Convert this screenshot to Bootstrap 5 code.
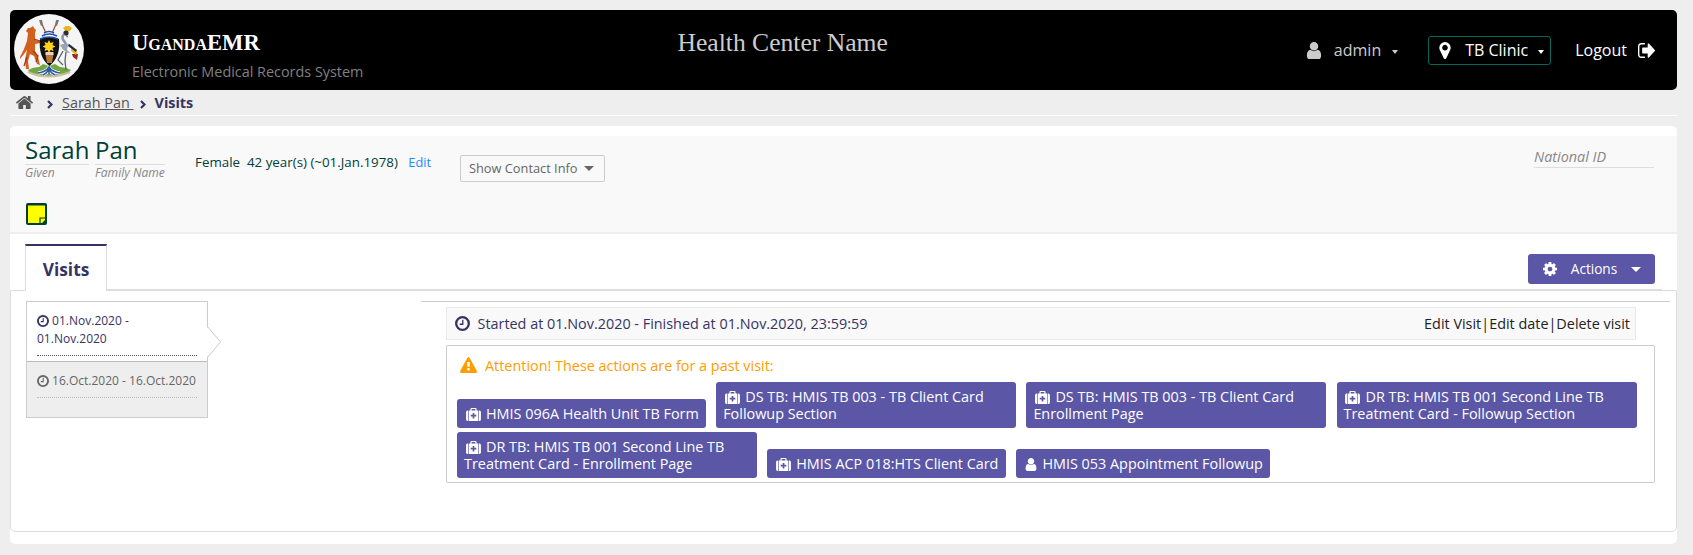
<!DOCTYPE html>
<html lang="en">
<head>
<meta charset="utf-8">
<title>UgandaEMR - Visits</title>
<link href="https://cdn.jsdelivr.net/npm/bootstrap@5.3.0/dist/css/bootstrap.min.css" rel="stylesheet">
<style>
body{background:#eee;font-family:"Open Sans",sans-serif;font-size:14.4px;color:#363463;padding:10px 16px 0 10px;white-space:nowrap;line-height:20px}
svg{display:block;fill:currentColor;flex:none}
.topbar{height:80px;background:#000;border-radius:5px;padding-left:4px;padding-right:22px}
.brand-side{width:663.5px}
.brandname{font:bold 22.6px/26px "Liberation Serif",serif;font-variant:small-caps;color:#fff}
.tagline{font-size:14.4px;color:#808080;line-height:20px;margin-top:6px}
.center-name{font:25.6px/30px "Liberation Serif",serif;color:#ccc;margin-top:18px}
.top-tools{font-size:16px;color:#fff;line-height:24px}
.admin-menu{color:#ccc}
.place{border:1px solid #00695c;border-radius:3px;height:29px;width:123px;padding-left:10px}
.tri{width:0;height:0;border:3.500px solid transparent;border-top:4px solid currentColor;border-bottom:0;margin-top:3px}
.tri-lg{border-width:5px;border-bottom:0;margin-top:0}
.crumbs{height:26px;border-bottom:1px solid #fff;font-size:14.4px;padding-left:6px}
.crumbs a{color:#555}
.panel{background:#fff;border-radius:5px;height:418px;margin-top:10px;padding-top:10px}
.patient{background:#f9f9f9;height:98px;border-bottom:2px solid #eee;padding-left:15px;padding-right:23px;color:#003f38}
.pname{font-size:24px;line-height:28px;border-bottom:1px solid #ddd;height:29px}
.hint{font-size:12.1px;font-style:italic;color:#888;line-height:16px}
.demo{font-size:13.35px;width:235px;margin:16px 0 0 30px}
.demo a{color:#1e88ff;text-decoration:none;font-size:12.8px}
.contact{border:1px solid #ccc;border-radius:2px;width:145px;height:27px;margin:19px 0 0 30px;padding:0 0 1px 8px;font-size:12.8px;color:#666}
.national{width:120px;height:21px;margin-top:11px;border-bottom:1px solid #ddd;font-size:14.4px;font-style:italic;color:#888}
.tabs-row{height:56px;padding-left:15px;padding-right:22px}
.tab-visits{width:82px;height:47px;margin-top:10px;border:1px solid #ddd;border-top:2px solid #363463;border-bottom:0;background:#fff;font-size:17.3px;font-weight:700;position:relative;z-index:1;padding-top:3px}
.tab-line{height:2px;background:#ddd;margin:-1px 15px 0 97px;position:relative}
.content-box{height:242px;margin-top:-1px;border:1px solid #ddd;border-radius:0 0 5px 5px}
.visits{width:182px;margin:10px 0 0 15px;height:117px;border:1px solid #ccc;background:#eee;font-size:12px;line-height:18px;color:#666}
.v-item{padding:10px 10px 0}
.v-item.on{background:#fff;color:#363463;height:60px;border-bottom:1px solid #bbb;position:relative;white-space:normal}
.v-item.on .v-text{border-bottom:1px dotted #555;height:44px}
.v-item.off .v-text{border-bottom:1px dotted #bbb;height:26px}
.v-item svg{display:inline-block;vertical-align:-2px}
.v-item .v-arrow{position:absolute;left:179px;top:24px}
.detail{width:1249px;margin:10px 0 0 213px;border-top:1px solid #ccc;padding:5px 0 0 25px}
.visit-head{width:1190px;height:33px;background:#f9f9f9;border:1px solid #eaeaea;padding:0 5px 0 8px}
.links{color:#222}
.acts{width:1209px;height:138px;margin-top:5px;border:1px solid #ccc;border-radius:2px;padding:10px 10px 0}
.attn{color:#ff9d00;height:26px;padding-left:3px}
.bt{background:#5b57a6;color:#fff;border-radius:3px;padding:6px 7px;font-size:14.4px;line-height:17px;width:300px;white-space:normal}
.bt svg{display:inline-block;vertical-align:-2px;margin:0 5.500px 0 1.500px}
.act-btn{width:127px;height:30px;background:#5b57a6;color:#fff;border-radius:3px;margin-top:20px;font-size:13.6px;padding:0 14px 0 15px}
</style>
</head>
<body>
<svg width="0" height="0" class="position-absolute">
<symbol id="user" viewBox="256 128 1280 1536"><path d="M1536 1399q0 109-62.500 187t-150.500 78h-854q-88 0-150.500-78t-62.500-187q0-85 8.500-160.500t31.500-152 58.500-131 94-89 134.500-34.500q131 128 313 128t313-128q76 0 134.500 34.500t94 89 58.500 131 31.500 152 8.500 160.500zm-256-887q0 159-112.500 271.500t-271.500 112.500-271.500-112.500-112.500-271.500 112.500-271.500 271.500-112.500 271.500 112.500 112.500 271.500z"/></symbol>
<symbol id="kit" viewBox="0 0 16 14"><path fill-rule="evenodd" d="M4.700 2.600V1.200Q4.700 0 6 0h4Q11.300 0 11.300 1.200v1.400h1.900V14H2.800V2.600zM6 2.600h4V1.200H6zM7.100 5.400v2H5v1.800h2.100v2h1.800v-2H11V7.400H8.900v-2zM2.100 2.600V14h-.6Q0 14 0 12.500v-8Q0 2.600 1.500 2.600zM13.900 2.600V14h.6q1.500 0 1.500-1.500v-8Q16 2.600 14.500 2.600z"/></symbol>
<symbol id="clock" viewBox="0 0 16 16"><path fill="none" stroke="currentColor" stroke-width="2.500" d="M8 1.250a6.750 6.750 0 1 1 0 13.500a6.750 6.750 0 1 1 0-13.500"/><path fill="none" stroke="currentColor" stroke-width="1.400" d="M8.300 4v4.800H5"/></symbol>
</svg>

<header class="topbar d-flex">
  <div class="brand-side d-flex">
    <svg width="70" height="70" viewBox="0 0 70 70" style="margin-top:4px">
      <circle cx="35" cy="35" r="35" fill="#f5f5f5"/>
      <path d="M27 8l8 18M43 8l-8 18" stroke="#a0522d" stroke-width="1.300"/>
      <path d="M25 6l3 0 1 5-2 1zM45 6l-3 0-1 5 2 1z" fill="#777"/>
      <path d="M14 56q5-3 11-3l4-3 6 2 6-2 5 3q6 0 11 3l-3 3q-9 3-19 3t-19-3z" fill="#74a744"/>
      <path d="M14 58q20 9 42 0" fill="none" stroke="#c9bd9a" stroke-width="2"/>
      <path d="M12 17l2-3 2 0 3-2 1 2 2 2-1 3v7l6 1-1 2-5 1 0 7 3 6 2 8-3-1-3-8-4-2-2 7 1 8-3 0-1-9 2-10-3 4-4 5 0-2 4-8 3-8 1-8z" fill="#d2601f"/>
      <path d="M20 25l6 2M19 37l5 5-2 6M13 43l-3 9" stroke="#9c3c12" stroke-width="1.300" fill="none"/>
      <path d="M49 14l3-2 3 0 3 2-2 3-4 1z" fill="#e5b71b"/>
      <circle cx="52" cy="19" r="2.600" fill="#28303c"/><path d="M52 21l2 1-1 2z" fill="#d52222"/>
      <path d="M50 20q-3 4 0 7t1 7" fill="none" stroke="#8998a9" stroke-width="2.500"/>
      <path d="M46 31q8-4 13 2t4 12q-4-2-6-6-6 1-11-8z" fill="#9aa5b3"/>
      <path d="M54 31l9 7-3 4-7-6z" fill="#fff"/><path d="M58 40l6 0-1 6-4-3z" fill="#972920"/><path d="M57 34l6 4-1 3-5-4z" fill="#e5b71b"/><path d="M55 30l8 6-1 2-8-6z" fill="#26282c"/>
      <path d="M52 38l-1 9 1 9M49 37l-5 9 5 5" stroke="#59636e" stroke-width="1.300" fill="none"/>
      <path d="M26 25q9-4 19 0 2 17-9.500 27Q24 43 26 25z" fill="#111"/>
      <path d="M29 20q6-7 12 0l3 5q-9-4-18 0z" fill="#fff"/>
      <path d="M30 19q5-3 10 0M28 22q7-4 15 0M26 25q9-4 18 0" stroke="#264fab" stroke-width="1.600" fill="none"/>
      <path d="M35 26l1.500 3 3-1-1 3 3 1.500-3 1.500 1 3-3-1-1.500 3-1.500-3-3 1 1-3-3-1.500 3-1.500-1-3 3 1z" fill="#ffd21c"/>
      <path d="M31.500 40h8l-1.500 9h-5z" fill="#b9793a"/><path d="M31.500 38h8v3h-8z" fill="#e5d5b3"/>
      <path d="M35 53q0 5-6 8M35 53q0 5 6 8M35 53v7M35 53q-3 5-11 6M35 53q3 5 11 6" fill="none" stroke="#fff" stroke-width="3"/>
      <path d="M35 53q0 5-6 8M35 53q0 5 6 8M35 53v7M35 53q-3 5-11 6M35 53q3 5 11 6" fill="none" stroke="#3157a8" stroke-width="1.500"/>
    </svg>
    <div style="margin:20px 0 0 48px"><div class="brandname">UgandaEMR</div><div class="tagline">Electronic Medical Records System</div></div>
  </div>
  <div class="center-name">Health Center Name</div>
  <div class="top-tools d-flex align-items-center ms-auto">
    <div class="admin-menu d-flex align-items-center"><svg width="16" height="17"><use href="#user"/></svg><span style="margin:0 11px 0 12px">admin</span><span class="tri"></span></div>
    <div class="place d-flex align-items-center" style="margin:0 24px 0 30px"><svg width="12" height="17" viewBox="384 128 1024 1536"><path d="M1152 640q0-106-75-181t-181-75-181 75-75 181 75 181 181 75 181-75 75-181zm256 0q0 109-33 179l-364 774q-16 33-47.500 52t-67.500 19-67.500-19-46.500-52l-365-774q-33-70-33-179 0-212 150-362t362-150 362 150 150 362z"/></svg><span style="margin:0 10px 0 14px">TB Clinic</span><span class="tri"></span></div>
    <span>Logout</span><svg style="margin-left:11px" width="17" height="15" viewBox="64 256 1568 1280" preserveAspectRatio="none"><path d="M704 1440q0 4 1 20t.5 26.500-3 23.500-10 19.500-20.500 6.500h-320q-119 0-203.500-84.500t-84.500-203.500v-704q0-119 84.500-203.500t203.500-84.500h320q13 0 22.500 9.500t9.500 22.500q0 4 1 20t.5 26.500-3 23.500-10 19.500-20.500 6.500h-320q-66 0-113 47t-47 113v704q0 66 47 113t113 47h312l11.500 1 11.500 3 8 5.500 7 9 2 13.500zm928-544q0 26-19 45l-544 544q-19 19-45 19t-45-19-19-45v-288h-448q-26 0-45-19t-19-45v-384q0-26 19-45t45-19h448v-288q0-26 19-45t45-19 45 19l544 544q19 19 19 45z"/></svg>
  </div>
</header>

<nav class="crumbs d-flex align-items-center">
  <svg width="17" height="13" viewBox="89 253 1614 1283" preserveAspectRatio="none" style="color:#555"><path d="M1472 992v480q0 26-19 45t-45 19h-384v-384h-256v384h-384q-26 0-45-19t-19-45v-480q0-1 .5-3t.5-3l575-474 575 474q1 2 1 6zm223-69l-62 74q-8 9-21 11h-3q-13 0-21-7l-692-577-692 577q-12 8-24 7-13-2-21-11l-62-74q-8-10-7-23.500t11-21.500l719-599q32-26 76-26t76 26l244 204v-195q0-14 9-23t23-9h192q14 0 23 9t9 23v408l219 182q10 8 11 21.500t-7 23.500z"/></svg>
  <svg width="6" height="9" viewBox="0 0 6 9" style="margin:3px 9px 0 14px"><path d="M1 1l3.500 3.500L1 8" fill="none" stroke="currentColor" stroke-width="2.200"/></svg>
  <a href="#">Sarah Pan&nbsp;</a>
  <svg width="6" height="9" viewBox="0 0 6 9" style="margin:3px 9px 0 6px"><path d="M1 1l3.500 3.500L1 8" fill="none" stroke="currentColor" stroke-width="2.200"/></svg>
  <b>Visits</b>
</nav>

<main class="panel">
  <section class="patient">
    <div class="d-flex align-items-start" style="height:67px">
      <div style="width:64px;margin-right:6px"><div class="pname">Sarah</div><div class="hint">Given</div></div>
      <div style="width:70px"><div class="pname">Pan</div><div class="hint">Family Name</div></div>
      <div class="demo">Female&nbsp; 42 year(s) (~01.Jan.1978) &nbsp; <a href="#">Edit</a></div>
      <div class="contact d-flex align-items-center">Show Contact Info<span class="tri tri-lg" style="margin-left:6px"></span></div>
      <div class="national ms-auto">National ID</div>
    </div>
    <svg width="22" height="22" viewBox="0 0 22 22" style="margin-left:1px"><rect width="21" height="22" rx="2" fill="#003f38"/><path d="M2 2.500h17V17l-3 3H2z" fill="#ff0"/><path d="M14 20v-5h5" fill="none" stroke="#003f38" stroke-width="1.200"/></svg>
  </section>
  <div class="tabs-row d-flex justify-content-between">
    <div class="tab-visits d-flex align-items-center justify-content-center">Visits</div>
    <div class="act-btn d-flex align-items-center"><svg width="14" height="14" viewBox="128 128 1536 1536"><path d="M1152 896q0-106-75-181t-181-75-181 75-75 181 75 181 181 75 181-75 75-181zm512-109v222q0 12-8 23t-20 13l-185 28q-19 54-39 91 35 50 107 138 10 12 10 25t-9 23q-27 37-99 108t-94 71q-12 0-26-9l-138-108q-44 23-91 38-16 136-29 186-7 28-36 28h-222q-14 0-24.500-8.500t-11.500-21.500l-28-184q-49-16-90-37l-141 107q-10 9-25 9-14 0-25-11-126-114-165-168-7-10-7-23 0-12 8-23 15-21 51-66.500t54-70.500q-27-50-41-99l-183-27q-13-2-21-12.500t-8-23.500v-222q0-12 8-23t19-13l186-28q14-46 39-92-40-57-107-138-10-12-10-24 0-10 9-23 26-36 98.500-107.500t94.500-71.500q13 0 26 10l138 107q44-23 91-38 16-136 29-186 7-28 36-28h222q14 0 24.500 8.500t11.500 21.500l28 184q49 16 90 37l142-107q9-9 24-9 13 0 25 10 129 119 165 170 7 8 7 22 0 12-8 23-15 21-51 66.500t-54 70.500q26 50 41 98l183 28q13 2 21 12.500t8 23.500z"/></svg><span class="mx-auto">Actions</span><span class="tri tri-lg"></span></div>
  </div>
  <div class="tab-line"></div>
  <section class="content-box d-flex align-items-start">
    <div class="visits">
      <div class="v-item on"><div class="v-text"><svg width="12" height="12"><use href="#clock"/></svg> 01.Nov.2020 - 01.Nov.2020</div>
        <svg class="v-arrow" width="16" height="32" viewBox="0 0 16 32"><path d="M1 1l13 15L1 31" fill="#fff"/><path d="M1.500 .5l13 15.500-13 15.500" fill="none" stroke="#ccc"/></svg></div>
      <div class="v-item off"><div class="v-text"><svg width="12" height="12"><use href="#clock"/></svg> 16.Oct.2020 - 16.Oct.2020</div></div>
    </div>
    <div class="detail">
      <div class="visit-head d-flex align-items-center"><svg width="15" height="15"><use href="#clock"/></svg><span style="margin-left:7.500px">Started at 01.Nov.2020 - Finished at 01.Nov.2020, 23:59:59</span><span class="links ms-auto">Edit Visit|Edit date|Delete visit</span></div>
      <div class="acts">
        <div class="attn d-flex align-items-start"><svg width="17" height="16" viewBox="0 0 1792 1664" style="margin-top:1px"><path d="M1024 1375v-190q0-14-9.500-23.500t-22.500-9.500h-192q-13 0-22.500 9.500t-9.500 23.500v190q0 14 9.500 23.500t22.500 9.500h192q13 0 22.500-9.500t9.500-23.500zm-2-374l18-459q0-12-10-19-13-11-24-11h-220q-11 0-24 11-10 7-10 21l17 457q0 10 10 16.500t24 6.500h185q14 0 23.500-6.500t10.500-16.500zm-14-934l768 1408q35 63-2 126-17 29-46.500 46t-63.500 17h-1536q-34 0-63.500-17t-46.500-46q-37-63-2-126l768-1408q17-31 47-49t65-18 65 18 47 49z"/></svg><span style="margin:0 0 0 8px">Attention! These actions are for a past visit:</span></div>
        <div class="d-flex flex-wrap align-items-end" style="gap:4px 10.2px">
          <div class="bt text-nowrap" style="width:249px"><svg width="15" height="13"><use href="#kit"/></svg>HMIS 096A Health Unit TB Form</div>
          <div class="bt"><svg width="15" height="13"><use href="#kit"/></svg>DS TB: HMIS TB 003 - TB Client Card Followup Section</div>
          <div class="bt"><svg width="15" height="13"><use href="#kit"/></svg>DS TB: HMIS TB 003 - TB Client Card Enrollment Page</div>
          <div class="bt"><svg width="15" height="13"><use href="#kit"/></svg>DR TB: HMIS TB 001 Second Line TB Treatment Card - Followup Section</div>
          <div class="bt"><svg width="15" height="13"><use href="#kit"/></svg>DR TB: HMIS TB 001 Second Line TB Treatment Card - Enrollment Page</div>
          <div class="bt text-nowrap" style="width:239px"><svg width="15" height="13"><use href="#kit"/></svg>HMIS ACP 018:HTS Client Card</div>
          <div class="bt text-nowrap" style="width:254px"><svg width="12" height="13"><use href="#user"/></svg>HMIS 053 Appointment Followup</div>
        </div>
      </div>
    </div>
  </section>
</main>
<script src="https://cdn.jsdelivr.net/npm/bootstrap@5.3.0/dist/js/bootstrap.bundle.min.js"></script>
</body>
</html>
